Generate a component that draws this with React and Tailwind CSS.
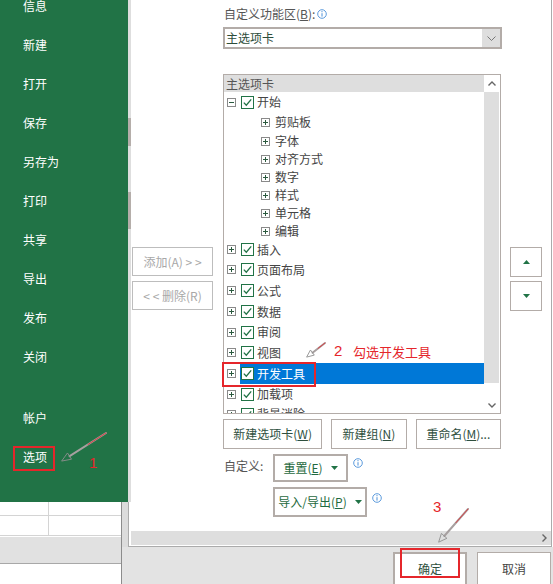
import React from 'react';

const menu = ['信息', '新建', '打开', '保存', '另存为', '打印', '共享', '导出', '发布', '关闭'];

const tree = [
  { label: '开始', top: true, open: true, h: 'h-[20px]' },
  { label: '剪贴板', h: 'h-[20px]' },
  { label: '字体', h: 'h-[18px]' },
  { label: '对齐方式', h: 'h-[18px]' },
  { label: '数字', h: 'h-[18px]' },
  { label: '样式', h: 'h-[18px]' },
  { label: '单元格', h: 'h-[18px]' },
  { label: '编辑', h: 'h-[18px]' },
  { label: '插入', top: true, h: 'h-[19px]' },
  { label: '页面布局', top: true, h: 'h-[21px]' },
  { label: '公式', top: true, h: 'h-[21px]' },
  { label: '数据', top: true, h: 'h-[21px]' },
  { label: '审阅', top: true, h: 'h-[20px]' },
  { label: '视图', top: true, h: 'h-[21px]' },
  { label: '开发工具', top: true, selected: true, h: 'h-[21px]' },
  { label: '加载项', top: true, h: 'h-[20px]' },
  { label: '背景消除', top: true, h: 'h-[20px]' },
];

function Expander({ open }) {
  return (
    <svg width="9" height="9" viewBox="0 0 9 9" className="shrink-0">
      <rect x="0.5" y="0.5" width="8" height="8" fill="white" stroke="#8a8a8a" />
      <line x1="2" y1="4.5" x2="7" y2="4.5" stroke="#2b5a3f" />
      {!open && <line x1="4.5" y1="2" x2="4.5" y2="7" stroke="#2b5a3f" />}
    </svg>
  );
}

function Check() {
  return (
    <svg width="13" height="13" viewBox="0 0 13 13" className="shrink-0">
      <rect x="0.5" y="0.5" width="12" height="12" fill="white" stroke="#217346" />
      <path d="M2.8 6.6 L5.3 9.2 L10.2 3.4" fill="none" stroke="#217346" strokeWidth="1.3" />
    </svg>
  );
}

function Info() {
  return (
    <svg width="10" height="10" viewBox="0 0 10 10" className="shrink-0">
      <circle cx="5" cy="5" r="4.3" fill="white" stroke="#4a8fd8" strokeWidth="0.9" />
      <line x1="5" y1="4.2" x2="5" y2="7.6" stroke="#4a8fd8" strokeWidth="1" />
      <circle cx="5" cy="2.7" r="0.6" fill="#4a8fd8" />
    </svg>
  );
}

function TriDown() {
  return (
    <svg width="7" height="4" viewBox="0 0 7 4" className="shrink-0">
      <path d="M0 0 L7 0 L3.5 4 Z" fill="#217346" />
    </svg>
  );
}

function TreeRow({ item }) {
  if (!item.top) {
    return (
      <div className={`${item.h} shrink-0 flex items-center pl-[37px]`}>
        <Expander />
        <span className="ml-[5px] text-[12px] leading-none text-[#444]">{item.label}</span>
      </div>
    );
  }
  return (
    <div className={`${item.h} shrink-0 flex items-center pl-[3px]`}>
      <Expander open={item.open} />
      <div className={`ml-[4px] flex-1 h-full flex items-center pl-[1px] ${item.selected ? 'bg-[#0078d7]' : ''}`}>
        <Check />
        <span className={`ml-[3px] text-[12px] leading-none ${item.selected ? 'text-white' : 'text-[#444]'}`}>{item.label}</span>
      </div>
    </div>
  );
}

export default function App() {
  return (
    <div className="relative w-[553px] h-[584px] overflow-hidden bg-white font-['Noto_Sans_CJK_SC',sans-serif] select-none">
      <div className="flex h-[547px]">
        {/* backstage menu */}
        <div className="w-[128px] flex flex-col">
          <div className="h-[502px] bg-[#217346] flex flex-col pl-[23px] text-white text-[12px] overflow-hidden">
            <div className="-mt-[14px]">
              {menu.map(m => (
                <div key={m} className="h-[39px] flex items-center leading-none">{m}</div>
              ))}
            </div>
            <div className="mt-[22px] h-[39px] flex items-center leading-none">帐户</div>
            <div className="h-[39px] flex items-center leading-none">选项</div>
          </div>
          <div className="flex-1 flex">
            <div className="w-[121px] flex flex-col">
              <div className="h-[14px] flex border-b border-[#d4d4d4]">
                <div className="w-[49px] border-r border-[#d4d4d4]" />
              </div>
              <div className="h-[20px] flex border-b border-[#d4d4d4]">
                <div className="w-[49px] border-r border-[#d4d4d4]" />
              </div>
              <div className="h-[1px]" />
              <div className="flex-1 bg-[#e1e1e1]" />
            </div>
            <div className="w-px bg-[#8c8c8c]" />
            <div className="flex-1 bg-[#dcdcdc]" />
          </div>
        </div>

        {/* dialog body */}
        <div className="w-[424px] flex border-b border-r border-[#ababab]">
          <div className="w-[3px] flex flex-col">
            <div className="h-[502px] bg-[#dedede] flex flex-col">
              <div className="h-[118px]" />
              <div className="h-[28px] bg-[#b5aeaa]" />
              <div className="h-[46px]" />
              <div className="h-[37px] bg-[#b5aeaa]" />
            </div>
            <div className="flex-1 border-l border-[#ababab]" />
          </div>

          <div className="flex-1 flex flex-col">
            <div className="flex-1 flex">
              {/* add / remove */}
              <div className="ml-[1px] w-[81px] pt-[247px] flex flex-col gap-[5px]">
                <div className="h-[29px] border border-[#bdbdbd] flex items-center justify-center text-[12px] text-[#a8a8a8] leading-none">添加(A) &gt; &gt;</div>
                <div className="h-[29px] border border-[#bdbdbd] flex items-center justify-center text-[12px] text-[#a8a8a8] leading-none">&lt; &lt; 删除(R)</div>
              </div>

              {/* main column */}
              <div className="ml-[10px] w-[278px] flex flex-col">
                <div className="h-[27px] flex items-center gap-[2px] pl-[1px] text-[12px] text-[#555] leading-none">
                  <span>自定义功能区(<span className="underline">B</span>):</span>
                  <Info />
                </div>
                <div className="h-[22px] w-[279px] border-2 border-[#b3aca8] flex items-center">
                  <span className="flex-1 pl-[1px] text-[12px] text-[#2d4d3a] leading-none">主选项卡</span>
                  <div className="w-[18px] h-full bg-[#dedede] flex items-center justify-center">
                    <svg width="9" height="5" viewBox="0 0 9 5"><path d="M0.5 0.5 L4.5 4.5 L8.5 0.5" fill="none" stroke="#777" /></svg>
                  </div>
                </div>

                <div className="mt-[25px] h-[340px] border border-[#b3aca8] flex overflow-hidden">
                  <div className="flex-1 flex flex-col overflow-hidden">
                    <div className="h-[17px] shrink-0 bg-[#dedede] flex items-center pl-[2px] text-[12px] text-[#555] leading-none">主选项卡</div>
                    {tree.map(item => <TreeRow key={item.label} item={item} />)}
                  </div>
                  <div className="w-[16px] flex flex-col">
                    <div className="h-[17px] flex items-center justify-center">
                      <svg width="8" height="5" viewBox="0 0 8 5"><path d="M0.5 4.5 L4 1 L7.5 4.5" fill="none" stroke="#666" strokeWidth="1.4" /></svg>
                    </div>
                    <div className="h-[291px] mr-[1px] bg-[#dedede]" />
                    <div className="flex-1 flex items-end justify-center pb-[5px]">
                      <svg width="8" height="5" viewBox="0 0 8 5"><path d="M0.5 0.5 L4 4 L7.5 0.5" fill="none" stroke="#666" strokeWidth="1.4" /></svg>
                    </div>
                  </div>
                </div>

                <div className="mt-[5px] h-[30px] flex gap-[9px] text-[12px] text-[#2e4f3e] leading-none">
                  <div className="w-[100px] border border-[#b3aca8] flex items-center justify-center">新建选项卡(<span className="underline">W</span>)</div>
                  <div className="w-[76px] border border-[#b3aca8] flex items-center justify-center">新建组(<span className="underline">N</span>)</div>
                  <div className="w-[86px] border border-[#b3aca8] flex items-center justify-center">重命名(<span className="underline">M</span>)...</div>
                </div>

                <div className="mt-[5px] h-[28px] flex items-start text-[12px] leading-none">
                  <span className="w-[50px] h-[24px] pl-[1px] flex items-center text-[#555]">自定义:</span>
                  <div className="w-[75px] h-[28px] border-2 border-[#b3aca8] flex items-center justify-center gap-[8px] text-[#1f6a40]">
                    <span>重置(<span className="underline">E</span>)</span>
                    <TriDown />
                  </div>
                  <div className="ml-[5px] mt-[4px]"><Info /></div>
                </div>

                <div className="mt-[5px] h-[30px] flex items-start text-[12px] leading-none">
                  <div className="ml-[50px] w-[94px] h-[30px] border-2 border-[#b3aca8] flex items-center justify-center gap-[8px] text-[#1f6a40]">
                    <span>导入/导出(<span className="underline">P</span>)</span>
                    <TriDown />
                  </div>
                  <div className="ml-[5px] mt-[6px]"><Info /></div>
                </div>
              </div>

              {/* move up / down */}
              <div className="ml-[9px] w-[32px] pt-[247px] flex flex-col gap-[4px]">
                <div className="h-[30px] border border-[#b3aca8] flex items-center justify-center">
                  <svg width="7" height="4" viewBox="0 0 7 4"><path d="M0 4 L7 4 L3.5 0 Z" fill="#217346" /></svg>
                </div>
                <div className="h-[30px] border border-[#b3aca8] flex items-center justify-center">
                  <TriDown />
                </div>
              </div>
            </div>

            {/* horizontal scrollbar */}
            <div className="h-[14px] mb-[1px] bg-[#dedede] flex items-center justify-end pr-[4px]">
              <svg width="5" height="8" viewBox="0 0 5 8"><path d="M0.5 0.5 L4 4 L0.5 7.5" fill="none" stroke="#666" strokeWidth="1.4" /></svg>
            </div>
          </div>
        </div>
      </div>

      {/* footer */}
      <div className="flex h-[37px]">
        <div className="w-[121px] flex flex-col">
          <div className="h-[17px] bg-[#e1e1e1] border-b border-[#a8a8a8]" />
          <div className="flex-1 bg-white" />
        </div>
        <div className="w-px bg-[#8c8c8c]" />
        <div className="flex-1 bg-[#e3e3e3] flex justify-end items-start pt-[5px] pr-[2px] gap-[10px] text-[12px] leading-none">
          <div className="w-[74px] h-[34px] border-2 border-[#b3aca8] bg-white flex items-center justify-center text-[#2e4f3e]">确定</div>
          <div className="w-[74px] h-[34px] border border-[#b3aca8] bg-white flex items-center justify-center text-[#444]">取消</div>
        </div>
      </div>

      {/* annotations */}
      <div className="absolute left-[13px] top-[446px] w-[42px] h-[25px] border-2 border-[#e5262b]" />
      <div className="absolute left-[222px] top-[362px] w-[94px] h-[25px] border-2 border-[#e5262b]" />
      <div className="absolute left-[400px] top-[548px] w-[60px] h-[30px] border-2 border-[#e5262b]" />
      <span className="absolute left-[89px] top-[455px] text-[15px] leading-none text-[#e5262b] font-['Liberation_Sans',sans-serif]">1</span>
      <span className="absolute left-[334px] top-[343px] text-[15px] leading-none text-[#e5262b] font-['Liberation_Sans',sans-serif]">2</span>
      <span className="absolute left-[353px] top-[345px] text-[13px] leading-none text-[#e5262b]">勾选开发工具</span>
      <span className="absolute left-[433px] top-[499px] text-[15px] leading-none text-[#e5262b] font-['Liberation_Sans',sans-serif]">3</span>
      <svg className="absolute left-0 top-0 pointer-events-none" width="553" height="584" viewBox="0 0 553 584">
        <g fill="none" strokeLinecap="round">
          <line x1="106" y1="433" x2="69.6" y2="456.2" stroke="#a7a0a0" strokeWidth="2" />
          <line x1="106" y1="433" x2="88" y2="444.5" stroke="#e5262b" strokeWidth="0.8" />
          <polygon points="62,461 71.5,459.2 67.7,453.3" stroke="#8f8f8f" strokeWidth="0.9" />
          <line x1="325" y1="343" x2="312.5" y2="352.7" stroke="#a7a0a0" strokeWidth="2" />
          <line x1="325" y1="343" x2="318" y2="348.4" stroke="#e5262b" strokeWidth="0.8" />
          <polygon points="307,357 314.3,355.1 310.7,350.3" stroke="#8f8f8f" strokeWidth="0.9" />
          <line x1="468" y1="509" x2="444.3" y2="536" stroke="#a7a0a0" strokeWidth="2" />
          <line x1="468" y1="509" x2="456" y2="522.6" stroke="#e5262b" strokeWidth="0.8" />
          <polygon points="439,542 446.9,538.3 441.7,533.7" stroke="#8f8f8f" strokeWidth="0.9" />
        </g>
      </svg>
    </div>
  );
}
